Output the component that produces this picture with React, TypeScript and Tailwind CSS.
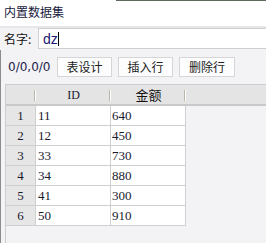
import React from 'react';

const rows = [
  { n: 1, id: '11', amt: '640' },
  { n: 2, id: '12', amt: '450' },
  { n: 3, id: '33', amt: '730' },
  { n: 4, id: '34', amt: '880' },
  { n: 5, id: '41', amt: '300' },
  { n: 6, id: '50', amt: '910' },
];

const cjk = { fontFamily: '"Noto Sans CJK SC", "Noto Sans", sans-serif' };
const serif = { fontFamily: '"Liberation Serif", "Noto Sans CJK SC", serif' };

const Sep = () => (
  <div className="absolute right-0 top-[5px] h-[11px] w-[2px] border-l border-[#bdb6a8] bg-white" />
);

const App = () => {
  return (
    <div className="w-[266px] h-[243px] bg-[#f3f3f5] flex flex-col overflow-hidden text-[#1a1a2e]" style={cjk}>
      <div className="relative h-[26px] bg-white shrink-0">
        <div className="absolute right-0 top-0 h-px w-[150px] bg-[#5d6b5d]" />
        <div className="pl-[4px] pt-[4px] text-[12px] leading-[16px] text-[#202040]">内置数据集</div>
      </div>
      <div className="h-[2px] bg-[#e7e7ea] shrink-0" />
      <div className="flex h-[21px] shrink-0 items-center">
        <div className="w-[38px] pl-[4px] text-[12px] leading-[16px] text-[#111]">名字:</div>
        <div className="flex-1 h-[21px] bg-white border border-r-0 border-[#cfcfd2] flex items-center pl-[4px]">
          <span className="text-[14px] leading-[16px] text-[#1a1a6e]" style={{ fontFamily: '"Liberation Sans", sans-serif' }}>dz</span>
          <span className="w-px h-[14px] bg-black" />
        </div>
      </div>
      <div className="flex-1 flex flex-col border-l border-[#8c8c8c] mt-[1px]">
        <div className="flex items-center h-[20px] mt-[7px] shrink-0">
          <span className="ml-[7px] w-[49px] text-[12px] text-[#1c1c4c]" style={{ fontFamily: '"DejaVu Sans", sans-serif' }}>0/0,0/0</span>
          <button className="w-[55px] h-[20px] bg-[#fdfdfd] border border-[#d6d6d8] text-[12px] leading-[16px] text-[#222]">表设计</button>
          <button className="ml-[6px] w-[55px] h-[20px] bg-[#fdfdfd] border border-[#d6d6d8] text-[12px] leading-[16px] text-[#222]">插入行</button>
          <button className="ml-[6px] w-[56px] h-[20px] bg-[#fdfdfd] border border-[#d6d6d8] text-[12px] leading-[16px] text-[#222]">删除行</button>
        </div>
        <div className="mt-[7px] ml-[4px] flex-1 border-l border-t border-[#cdcdcf] bg-[#f3f3f5] flex flex-col">
          <div className="flex h-[21px] bg-[#e4e4e4] border-b-[2px] border-[#c9c9c9] shrink-0">
            <div className="relative w-[30px]"><Sep /></div>
            <div className="relative w-[75px] flex items-center justify-center text-[12px]" style={serif}>ID<Sep /></div>
            <div className="relative w-[75px] flex items-center justify-center text-[13px] text-[#111]">金额<Sep /></div>
          </div>
          {rows.map((r) => (
            <div key={r.n} className="flex h-[20px] shrink-0">
              <div className="w-[30px] bg-[#e6e6e6] border-r border-b border-[#cfcfcf] flex items-center justify-center text-[13px] text-[#1a1a2e]" style={serif}>{r.n}</div>
              <div className="w-[75px] bg-white border-r border-b border-[#cfcfcf] flex items-center pl-[2px] text-[13px] text-[#1a1a2e]" style={serif}>{r.id}</div>
              <div className="w-[75px] bg-white border-r border-b border-[#cfcfcf] flex items-center pl-[1px] text-[13px] text-[#1a1a2e]" style={serif}>{r.amt}</div>
            </div>
          ))}
        </div>
      </div>
    </div>
  );
};

export default App;
